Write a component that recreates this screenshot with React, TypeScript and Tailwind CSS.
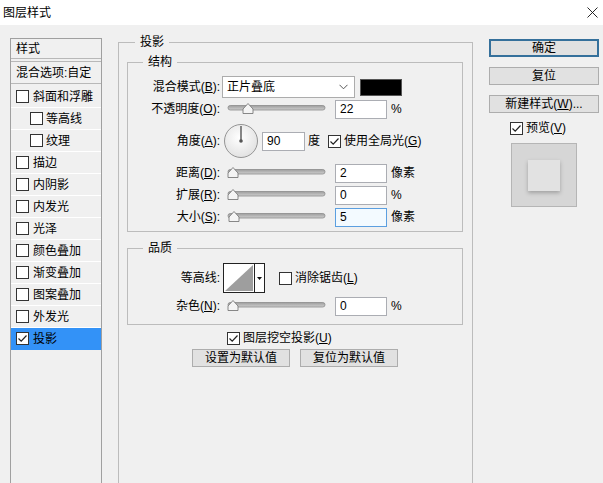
import React from 'react'

function Check({ checked = false }: { checked?: boolean }) {
  return (
    <span className="inline-flex w-[13px] h-[13px] shrink-0 border border-[#333] bg-white items-center justify-center">
      {checked && (
        <svg width="11" height="11" viewBox="0 0 11 11">
          <path d="M1.5 5.5 L4.2 8.2 L9.5 2.5" fill="none" stroke="#222" strokeWidth="1.2" />
        </svg>
      )}
    </span>
  )
}

function Key({ text, k, colon = true }: { text: string; k: string; colon?: boolean }) {
  return (
    <>
      {text}(<span className="underline">{k}</span>){colon ? ':' : ''}
    </>
  )
}

function Slider({ pos }: { pos: number }) {
  return (
    <svg width="100" height="16" viewBox="0 0 100 16" className="ml-[6px] shrink-0">
      <defs>
        <linearGradient id={`tr${pos}`} x1="0" y1="0" x2="0" y2="1">
          <stop offset="0" stopColor="#9d9d9d" />
          <stop offset="1" stopColor="#cfcfcf" />
        </linearGradient>
      </defs>
      <rect x="2" y="4.5" width="97" height="4.5" rx="2.2" fill={`url(#tr${pos})`} stroke="#8c8c8c" strokeWidth="0.8" />
      <path
        d={`M${pos} 2.5 L${pos + 5} 8 L${pos + 5} 12.5 L${pos - 5} 12.5 L${pos - 5} 8 Z`}
        fill="#f4f4f4"
        stroke="#7a7a7a"
        strokeWidth="0.9"
        strokeLinejoin="round"
      />
    </svg>
  )
}

function Field({ value, w = 'w-[52px]', focus = false }: { value: string; w?: string; focus?: boolean }) {
  return (
    <div
      className={
        focus
          ? `${w} h-[19px] shrink-0 border border-[#5b9fe0] bg-[#f3faff] pl-[4px] flex items-center text-[12px]`
          : `${w} h-[19px] shrink-0 border border-[#abadb3] bg-white pl-[4px] flex items-center text-[12px]`
      }
    >
      {value}
    </div>
  )
}

function SliderRow({
  label,
  k,
  pos,
  value,
  unit,
  focus,
}: {
  label: string
  k: string
  pos: number
  value: string
  unit: string
  focus?: boolean
}) {
  return (
    <div className="flex items-center h-[22px]">
      <div className="w-[92px] shrink-0 text-right">
        <Key text={label} k={k} />
      </div>
      <Slider pos={pos} />
      <div className="ml-[9px]">
        <Field value={value} focus={focus} />
      </div>
      <span className="ml-[4px]">{unit}</span>
    </div>
  )
}

const effects: { name: string; indent?: boolean; on?: boolean }[] = [
  { name: '斜面和浮雕' },
  { name: '等高线', indent: true },
  { name: '纹理', indent: true },
  { name: '描边' },
  { name: '内阴影' },
  { name: '内发光' },
  { name: '光泽' },
  { name: '颜色叠加' },
  { name: '渐变叠加' },
  { name: '图案叠加' },
  { name: '外发光' },
  { name: '投影', on: true },
]

function Button({ children, w = 'w-[110px]', primary = false }: { children: React.ReactNode; w?: string; primary?: boolean }) {
  return (
    <div
      className={
        primary
          ? `${w} h-[18px] shrink-0 border-2 border-[#35709b] bg-[#e1e1e1] flex items-center justify-center`
          : `${w} h-[18px] shrink-0 border border-[#adadad] bg-[#e1e1e1] flex items-center justify-center`
      }
    >
      {children}
    </div>
  )
}

export default function App() {
  return (
    <div className="w-[603px] h-[483px] overflow-hidden bg-[#f0f0f0] text-[12px] leading-[16px] text-black font-['Liberation_Sans','Noto_Sans_CJK_SC',sans-serif]">
      {/* title bar */}
      <div className="h-[25px] bg-white flex items-center justify-between pl-[3px] pr-[5px]">
        <span>图层样式</span>
        <svg width="11" height="11" viewBox="0 0 11 11">
          <path d="M0.5 0.5 L10.5 10.5 M10.5 0.5 L0.5 10.5" stroke="#111" strokeWidth="0.9" />
        </svg>
      </div>

      <div className="flex items-start pl-[10px] pt-[9px]">
        {/* style list */}
        <div className="mt-[4px] w-[92px] h-[460px] shrink-0 border border-[#a0a0a0] bg-[#f0f0f0]">
          <div className="h-[20px] border-b border-[#b8b8b8] pl-[5px] flex items-center">样式</div>
          <div className="mt-[2px] h-[23px] border-t border-b border-[#b8b8b8] pl-[5px] flex items-center">
            混合选项:自定
          </div>
          <div className="pt-[2px]">
            {effects.map((e) => (
              <div
                key={e.name}
                className={
                  e.on
                    ? 'h-[22px] flex items-center gap-[4px] pl-[5px] bg-[#3392f7] border-b border-[#3392f7]'
                    : e.indent
                    ? 'h-[22px] flex items-center gap-[3px] pl-[19px] border-b border-white'
                    : 'h-[22px] flex items-center gap-[4px] pl-[5px] border-b border-white'
                }
              >
                <Check checked={e.on} />
                <span>{e.name}</span>
              </div>
            ))}
          </div>
        </div>

        {/* main group */}
        <fieldset className="ml-[16px] w-[355px] h-[470px] shrink-0 border border-[#bcbcbc] p-0 m-0">
          <legend className="ml-[16px] px-[5px] leading-[16px]">投影</legend>
          <div className="pl-[8px] pr-[9px] pt-[4px]">
            <fieldset className="border border-[#bcbcbc] p-0 m-0">
              <legend className="ml-[15px] px-[5px] leading-[16px]">结构</legend>
              <div className="pt-[6px] pb-[3px]">
                <div className="flex items-center h-[22px]">
                  <div className="w-[92px] shrink-0 text-right">
                    <Key text="混合模式" k="B" />
                  </div>
                  <div className="ml-[2px] w-[133px] h-[22px] shrink-0 border border-[#acacac] bg-white flex items-center justify-between pl-[4px] pr-[6px]">
                    <span>正片叠底</span>
                    <svg width="9" height="6" viewBox="0 0 9 6">
                      <path d="M0.5 0.8 L4.5 4.8 L8.5 0.8" fill="none" stroke="#444" strokeWidth="0.9" />
                    </svg>
                  </div>
                  <div className="ml-[5px] w-[42px] h-[17px] shrink-0 bg-black border border-[#555]" />
                </div>
                <SliderRow label="不透明度" k="O" pos={22} value="22" unit="%" />
                <div className="flex items-center h-[42px]">
                  <div className="w-[92px] shrink-0 text-right">
                    <Key text="角度" k="A" />
                  </div>
                  <svg width="36" height="36" viewBox="0 0 36 36" className="ml-[3px] shrink-0">
                    <defs>
                      <radialGradient id="dial" cx="0.45" cy="0.4" r="0.6">
                        <stop offset="0" stopColor="#ffffff" />
                        <stop offset="1" stopColor="#e2e2e2" />
                      </radialGradient>
                    </defs>
                    <circle cx="18" cy="18" r="16.5" fill="url(#dial)" stroke="#8a8a8a" strokeWidth="0.9" />
                    <line x1="18" y1="18" x2="18" y2="3" stroke="#555" strokeWidth="1.4" />
                    <circle cx="18" cy="18" r="1.8" fill="#555" />
                  </svg>
                  <div className="ml-[3px]">
                    <Field value="90" w="w-[43px]" />
                  </div>
                  <span className="ml-[3px]">度</span>
                  <span className="ml-[8px] flex items-center gap-[3px]">
                    <Check checked />
                    <span>
                      <Key text="使用全局光" k="G" colon={false} />
                    </span>
                  </span>
                </div>
                <SliderRow label="距离" k="D" pos={7} value="2" unit="像素" />
                <SliderRow label="扩展" k="R" pos={7} value="0" unit="%" />
                <SliderRow label="大小" k="S" pos={8} value="5" unit="像素" focus />
              </div>
            </fieldset>

            <fieldset className="mt-[8px] border border-[#bcbcbc] p-0 m-0">
              <legend className="ml-[15px] px-[5px] leading-[16px]">品质</legend>
              <div className="pt-[7px] pb-[7px]">
                <div className="flex items-center h-[30px]">
                  <div className="w-[92px] shrink-0 text-right">等高线:</div>
                  <div className="ml-[3px] w-[42px] h-[30px] shrink-0 border border-[#222] bg-white flex">
                    <div className="w-[30px] h-full p-[1px]">
                      <svg width="28" height="26" viewBox="0 0 28 26" preserveAspectRatio="none">
                        <path d="M0 26 L28 0 L28 26 Z" fill="#9e9e9e" />
                      </svg>
                    </div>
                    <div className="flex-1 border-l border-[#222] flex items-center justify-center">
                      <svg width="5" height="3" viewBox="0 0 5 3">
                        <path d="M0 0 L5 0 L2.5 3 Z" fill="#111" />
                      </svg>
                    </div>
                  </div>
                  <span className="ml-[14px] flex items-center gap-[3px]">
                    <Check />
                    <span>
                      <Key text="消除锯齿" k="L" colon={false} />
                    </span>
                  </span>
                </div>
                <div className="mt-[2px]">
                  <SliderRow label="杂色" k="N" pos={7} value="0" unit="%" />
                </div>
              </div>
            </fieldset>

            <div className="mt-[4px] h-[18px] pl-[100px] flex items-center gap-[3px]">
              <Check checked />
              <span>
                <Key text="图层挖空投影" k="U" colon={false} />
              </span>
            </div>
            <div className="mt-[2px] flex justify-center gap-[10px]">
              <Button w="w-[98px]">设置为默认值</Button>
              <Button w="w-[98px]">复位为默认值</Button>
            </div>
          </div>
        </fieldset>

        {/* right column */}
        <div className="ml-[16px] mt-[5px] w-[110px] shrink-0 flex flex-col">
          <Button primary>确定</Button>
          <div className="mt-[10px]">
            <Button>复位</Button>
          </div>
          <div className="mt-[10px]">
            <Button>
              新建样式(<span className="underline">W</span>)...
            </Button>
          </div>
          <div className="mt-[7px] h-[16px] ml-[21px] flex items-center gap-[3px]">
            <Check checked />
            <span>
              预览(<span className="underline">V</span>)
            </span>
          </div>
          <div className="mt-[7px] ml-[22px] w-[66px] h-[64px] border border-[#b5b5b5] bg-[#d6d6d6] flex items-center justify-center">
            <div className="w-[32px] h-[31px] bg-[#e2e2e2] shadow-[0_2px_4px_rgba(0,0,0,0.25)]" />
          </div>
        </div>
      </div>
    </div>
  )
}
